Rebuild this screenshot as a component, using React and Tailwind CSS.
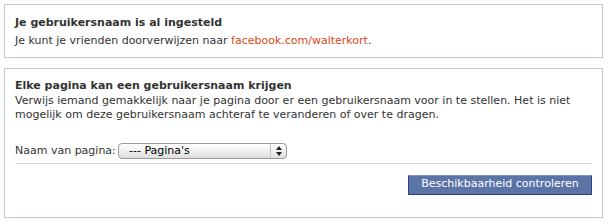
export default function App() {
  const font = { fontFamily: '"DejaVu Sans", "Liberation Sans", sans-serif' };
  return (
    <div className="w-[608px] h-[224px] bg-white pt-[4px] text-[11px] text-[#333333]" style={font}>
      <div className="mx-[4px] w-[599px] border border-[#bdc7d8] px-[10px] pt-[9px] pb-[7px]">
        <div className="font-bold leading-[18px]">Je gebruikersnaam is al ingesteld</div>
        <div className="leading-[18px]">
          Je kunt je vrienden doorverwijzen naar{' '}
          <a className="text-[#d9481c]">facebook.com/walterkort</a>.
        </div>
      </div>
      <div className="mx-[4px] mt-[10px] w-[599px] border border-[#bdc7d8] px-[10px] pt-[10px] pb-[22px]">
        <div className="font-bold leading-[14px]">Elke pagina kan een gebruikersnaam krijgen</div>
        <div className="mt-[1px] leading-[14px]">
          Verwijs iemand gemakkelijk naar je pagina door er een gebruikersnaam voor in te stellen. Het is niet
          mogelijk om deze gebruikersnaam achteraf te veranderen of over te dragen.
        </div>
        <div className="mt-[21px] flex items-center border-b border-[#d9d9d9] pb-[3px]">
          <span className="w-[103px]">Naam van pagina:</span>
          <div className="relative flex h-[16px] w-[169px] items-center rounded-[4px] border border-[#9a9a9a] bg-gradient-to-b from-[#ffffff] via-[#f0f0f0] to-[#dedede] pl-[10px] text-[11px] text-black">
            <span>--- Pagina's</span>
            <div className="absolute right-0 top-0 flex h-full w-[16px] items-center justify-center border-l border-[#c4c4c4]">
              <svg width="6" height="10" viewBox="0 0 6 10">
                <path d="M3 0 L6 4 L0 4 Z M0 6 L6 6 L3 10 Z" fill="#222" />
              </svg>
            </div>
          </div>
        </div>
        <div className="mt-[11px] flex justify-end">
          <button className="h-[20px] w-[184px] border border-t-[#7f93bc] border-x-[#29447e] border-b-[#29447e] bg-[#5b74a8] text-[11px] text-white">
            Beschikbaarheid controleren
          </button>
        </div>
      </div>
    </div>
  );
}
